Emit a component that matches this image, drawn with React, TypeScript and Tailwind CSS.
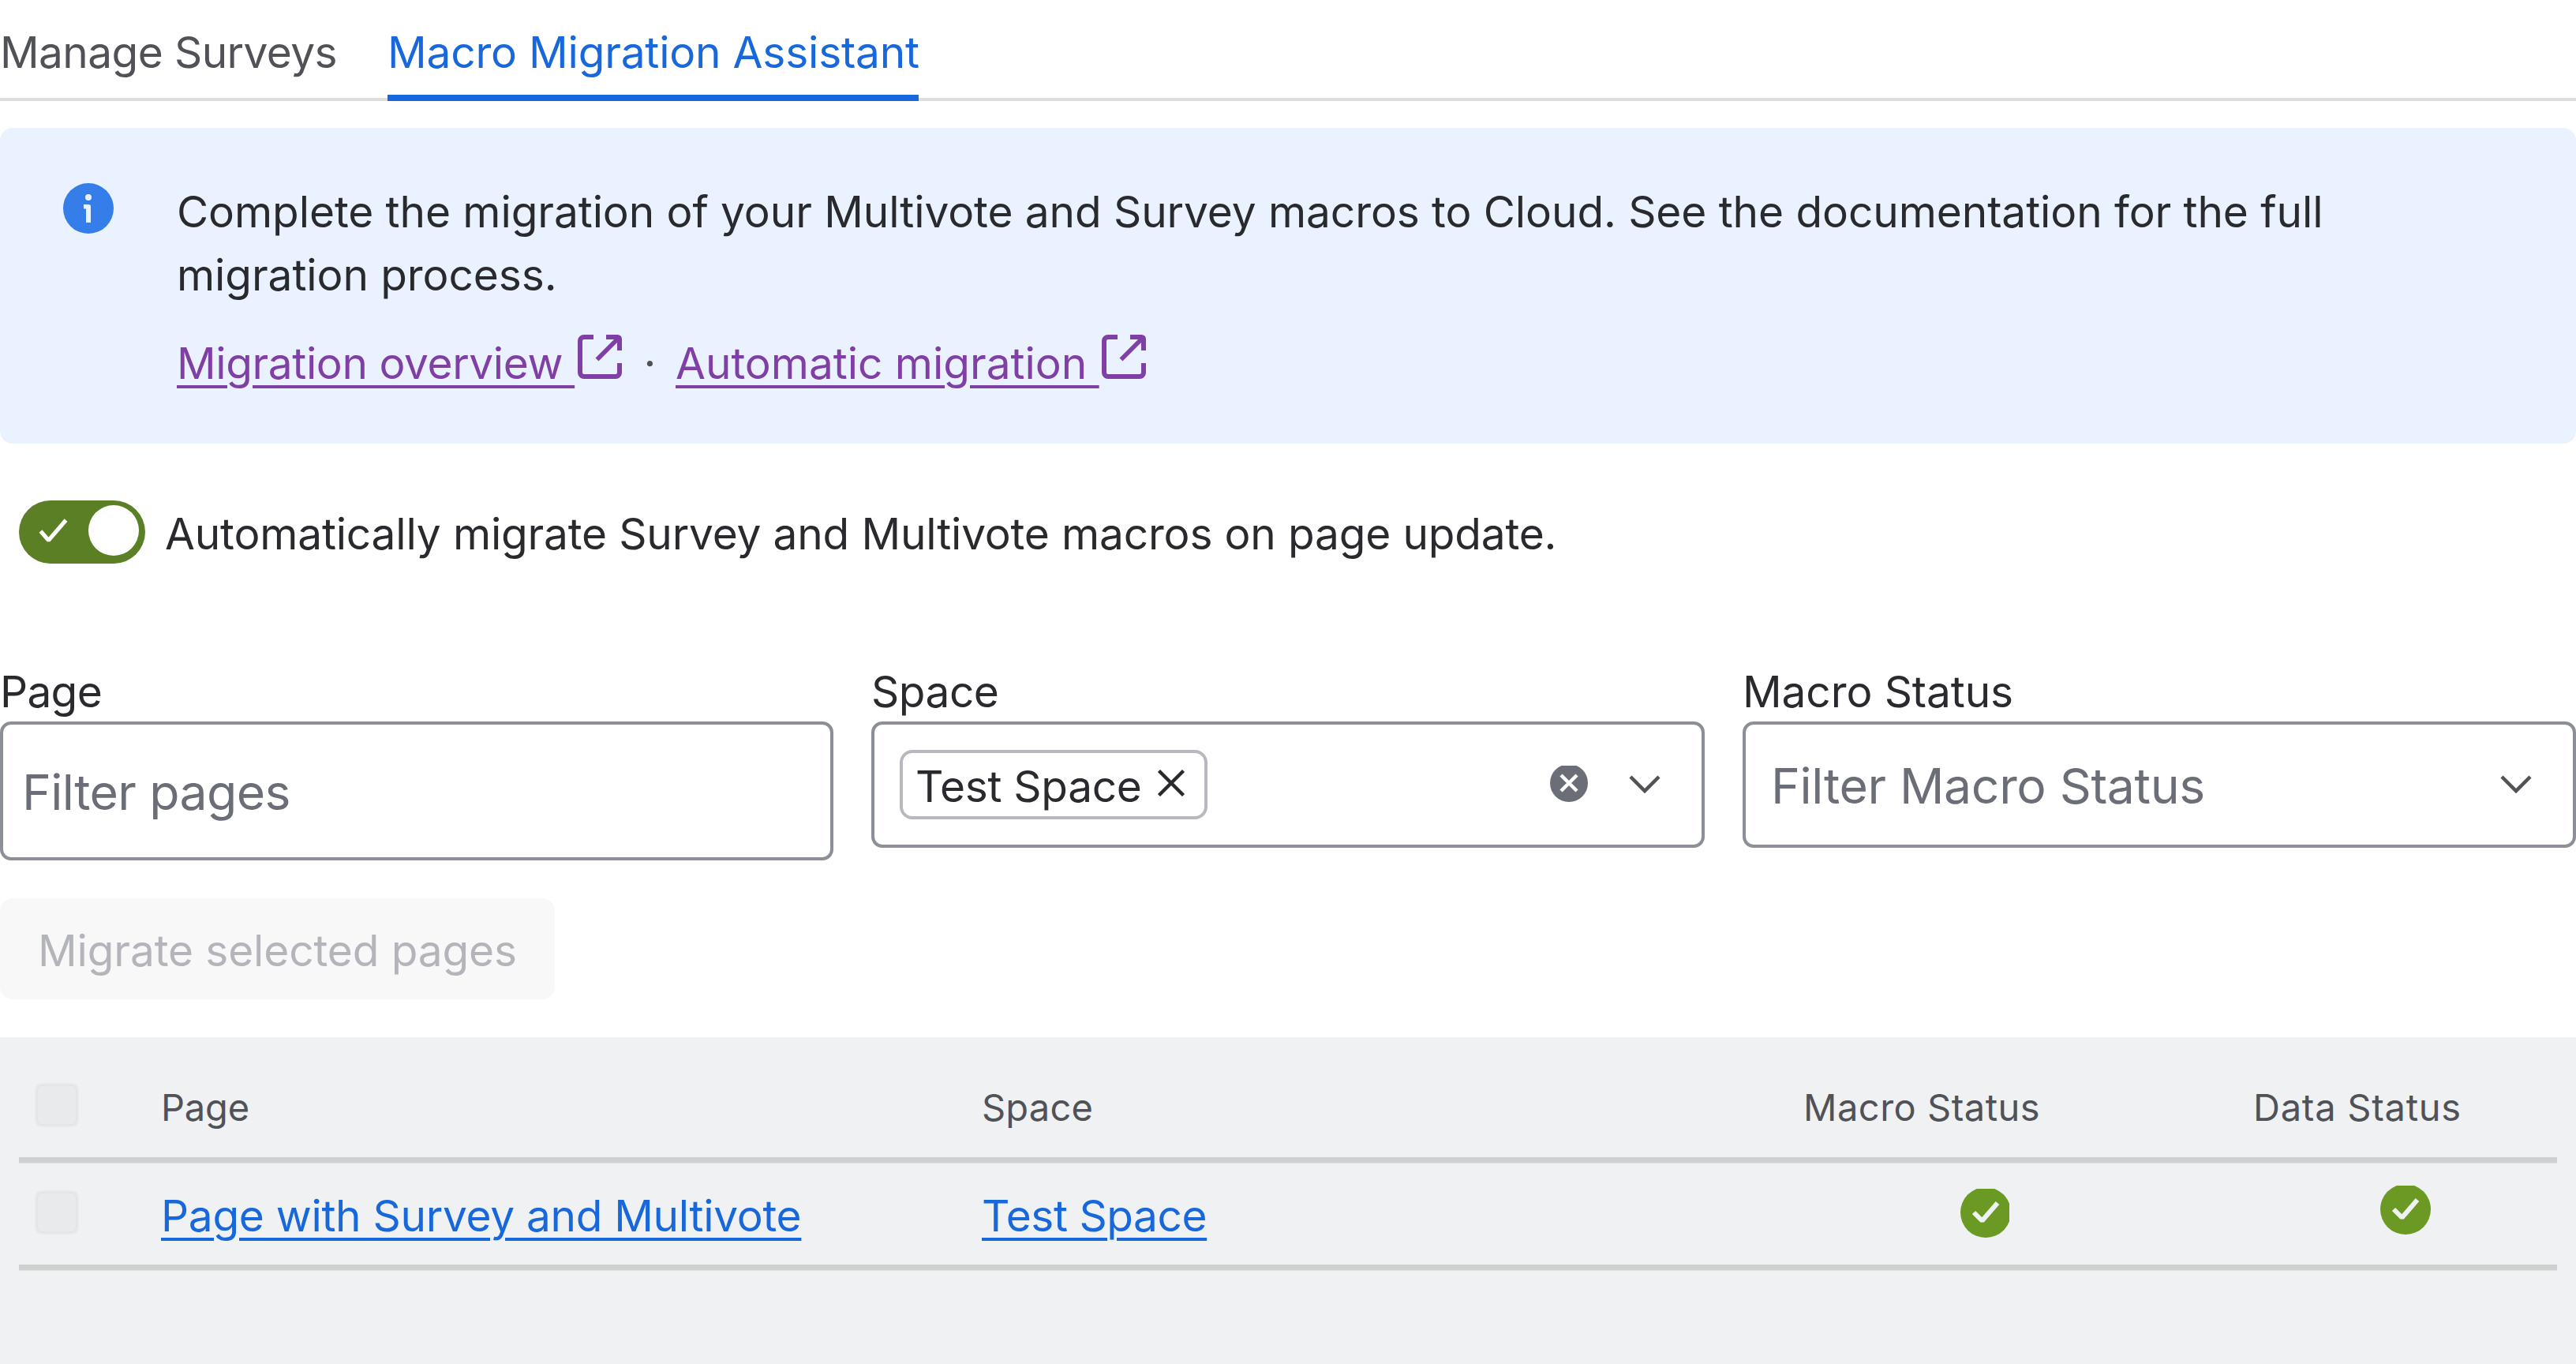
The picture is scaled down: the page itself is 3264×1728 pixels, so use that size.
import React from 'react';

interface IconProps {
  className?: string;
}

const InfoIcon: React.FC<IconProps> = ({ className }) => (
  <svg viewBox="0 0 64 64" className={className}>
    <circle cx="32" cy="32" r="32" fill="#357DE8" />
    <circle cx="32" cy="18" r="4" fill="#E9F2FE" />
    <path d="M26 27h6.5a2.5 2.5 0 0 1 2.5 2.5V50h-6V32.5h-3z" fill="#E9F2FE" />
  </svg>
);

const ExternalIcon: React.FC<IconProps> = ({ className }) => (
  <svg viewBox="0 0 56 56" className={className} fill="none" stroke="currentColor" strokeWidth="6">
    <path d="M20 3H8a5 5 0 0 0-5 5v40a5 5 0 0 0 5 5h40a5 5 0 0 0 5-5V36" />
    <path d="M36 3h14.500a2.500 2.500 0 0 1 2.500 2.500V20" />
    <path d="M52 4L24.500 31.500" strokeWidth="5.500" />
  </svg>
);

const ChevronIcon: React.FC<IconProps> = ({ className }) => (
  <svg viewBox="0 0 40 24" className={className} fill="none" stroke="#505258" strokeWidth="4.5">
    <path d="M2 2l18 18L38 2" />
  </svg>
);

// The viewport trims a sliver off the top (and off the right when `trimRight` is set)
const StatusIcon: React.FC<{ trimRight?: boolean }> = ({ trimRight }) => (
  <svg
    viewBox={trimRight ? '0 2 62 62' : '0 2 64 62'}
    className={trimRight ? 'w-[62px] h-[62px]' : 'w-16 h-[62px]'}
    fill="none"
  >
    <circle cx="32" cy="32" r="32" fill="#6A9A23" />
    <path d="M17 32l10.500 10.500L47 20" stroke="#EFF1F3" strokeWidth="6" strokeLinejoin="bevel" />
  </svg>
);

const Checkbox: React.FC = () => (
  <div className="w-14 h-14 ml-5 rounded-[9px] bg-[#E9EAEC] p-[2px]">
    <div className="w-full h-full rounded-[7px] border-2 border-[#E4E5E7]" />
  </div>
);

const Divider: React.FC = () => <div className="h-2 bg-[#CFD1D0] border-b border-[#E0E2E3]" />;

const rowGrid = 'grid grid-cols-[180px_1040px_1041px_570px_385px] items-start';
const linkStyle = 'underline decoration-[4px] underline-offset-[8px]';

export default function App() {
  return (
    <div className="w-[3264px] h-[1728px] overflow-hidden bg-white font-['Inter',sans-serif] text-[55px] leading-[80px] text-[#292A2E] whitespace-nowrap">
      {/* Tabs */}
      <nav className="flex gap-16 h-[128px] border-b-4 border-[#DDDDDD]">
        <div className="w-[427px] pt-[26px] text-[#505258] tracking-[-0.6px]">Manage Surveys</div>
        <div className="w-[673px] h-[128px] pt-[26px] text-[#1868DB] border-b-8 border-[#1868DB] tracking-[-0.2px]">
          Macro Migration Assistant
        </div>
      </nav>

      {/* Info banner */}
      <section className="mt-[34px] h-[400px] flex rounded-2xl bg-[#E9F2FE] pl-20 pt-[66px]">
        <InfoIcon className="w-16 h-16 mt-1 shrink-0" />
        <div className="ml-20">
          <p className="tracking-[-0.085px]">
            Complete the migration of your Multivote and Survey macros to Cloud. See the documentation for the full
            <br />
            migration process.
          </p>
          <div className="mt-8 flex items-start text-[#803FA5]">
            <a className={`${linkStyle} w-[504px] whitespace-pre tracking-[-0.4px]`}>{'Migration overview '}</a>
            <ExternalIcon className="w-14 h-14 ml-1 mt-1" />
            <span className="w-[68px] pl-[3px] text-center text-[#505258]">·</span>
            <a className={`${linkStyle} w-[536px] whitespace-pre tracking-[-0.03px]`}>{'Automatic migration '}</a>
            <ExternalIcon className="w-14 h-14 ml-1 mt-1" />
          </div>
        </div>
      </section>

      {/* Auto-migrate toggle */}
      <section className="mt-[72px] ml-6 h-20 flex">
        <div className="w-40 h-20 rounded-full bg-[#5B7F24] flex items-start pt-[6px] pr-2 justify-between">
          <svg viewBox="0 0 40 36" className="w-10 h-9 ml-6 mt-[15px]" fill="none" stroke="#fff" strokeWidth="5">
            <path d="M3.500 18l10 11.500L35.500 4" strokeLinejoin="bevel" />
          </svg>
          <div className="w-16 h-16 rounded-full bg-white" />
        </div>
        <span className="ml-[25px] pt-[2px] tracking-[-0.18px]">
          Automatically migrate Survey and Multivote macros on page update.
        </span>
      </section>

      {/* Filters */}
      <section className="mt-[122px] flex items-start gap-12">
        <div className="w-[1056px]">
          <div className="h-[78px] tracking-[-0.7px]">Page</div>
          <div className="h-[176px] border-4 border-[#8C8F97] rounded-[14px] pl-6 text-[62.5px] leading-[170px] text-[#6B6E76] tracking-[-0.6px]">
            Filter pages
          </div>
        </div>
        <div className="w-[1056px]">
          <div className="h-[78px] tracking-[-0.5px]">Space</div>
          <div className="h-40 border-4 border-[#8C8F97] rounded-[14px] pl-8 pr-[52px] flex items-center">
            <div className="w-[390px] h-[88px] border-4 border-[#B7B9BE] rounded-2xl pl-4 pr-6 flex items-start justify-between leading-[84px]">
              <span className="tracking-[-0.3px]">Test Space</span>
              <svg viewBox="0 0 36 36" className="w-9 h-9 mt-5" fill="none" stroke="#292A2E" strokeWidth="4.5">
                <path d="M2.500 2.500l31 31M33.500 2.500l-31 31" />
              </svg>
            </div>
            <svg viewBox="0 2 48 46" className="w-12 h-[46px] ml-auto mb-0.5" fill="none">
              <circle cx="24" cy="24" r="24" fill="#6B6E76" />
              <path d="M14 14l20 20M34 14L14 34" stroke="#fff" strokeWidth="4.5" />
            </svg>
            <ChevronIcon className="w-10 h-6 ml-[52px]" />
          </div>
        </div>
        <div className="w-[1056px]">
          <div className="h-[78px] tracking-[-0.1px]">Macro Status</div>
          <div className="h-40 border-4 border-[#8C8F97] rounded-[14px] pl-8 pr-[52px] flex items-start justify-between">
            <span className="text-[62.5px] leading-[155px] text-[#6B6E76] tracking-[-0.35px]">Filter Macro Status</span>
            <ChevronIcon className="w-10 h-6 mt-16" />
          </div>
        </div>
      </section>

      <button
        disabled
        className="block mt-12 w-[703px] h-32 rounded-2xl bg-[#F8F8F8] pl-12 pt-[2px] text-left leading-[128px] text-[#B3B5BA] tracking-[-0.13px]"
      >
        Migrate selected pages
      </button>

      {/* Pages table */}
      <section className="mt-12 h-[414px] bg-[#EFF1F3] px-6">
        <div className={`${rowGrid} h-[152px] text-[47px] text-[#505258]`}>
          <div className="pt-[58px]"><Checkbox /></div>
          <div className="pt-[49px] tracking-[-0.2px]">Page</div>
          <div className="pt-[49px] tracking-[0.2px]">Space</div>
          <div className="pt-[49px] tracking-[0.5px]">Macro Status</div>
          <div className="pt-[49px] tracking-[0.75px]">Data Status</div>
        </div>
        <Divider />
        <div className={`${rowGrid} h-[128px] text-[#1868DB]`}>
          <div className="pt-[34px]"><Checkbox /></div>
          <div className="pt-[26px] tracking-[-0.31px]"><a className={linkStyle}>Page with Survey and Multivote</a></div>
          <div className="pt-[26px] tracking-[-0.45px]"><a className={linkStyle}>Test Space</a></div>
          <div className="pt-8 pl-[199px]"><StatusIcon trimRight /></div>
          <div className="pt-7 pl-[161px]"><StatusIcon /></div>
        </div>
        <Divider />
      </section>
    </div>
  );
}
